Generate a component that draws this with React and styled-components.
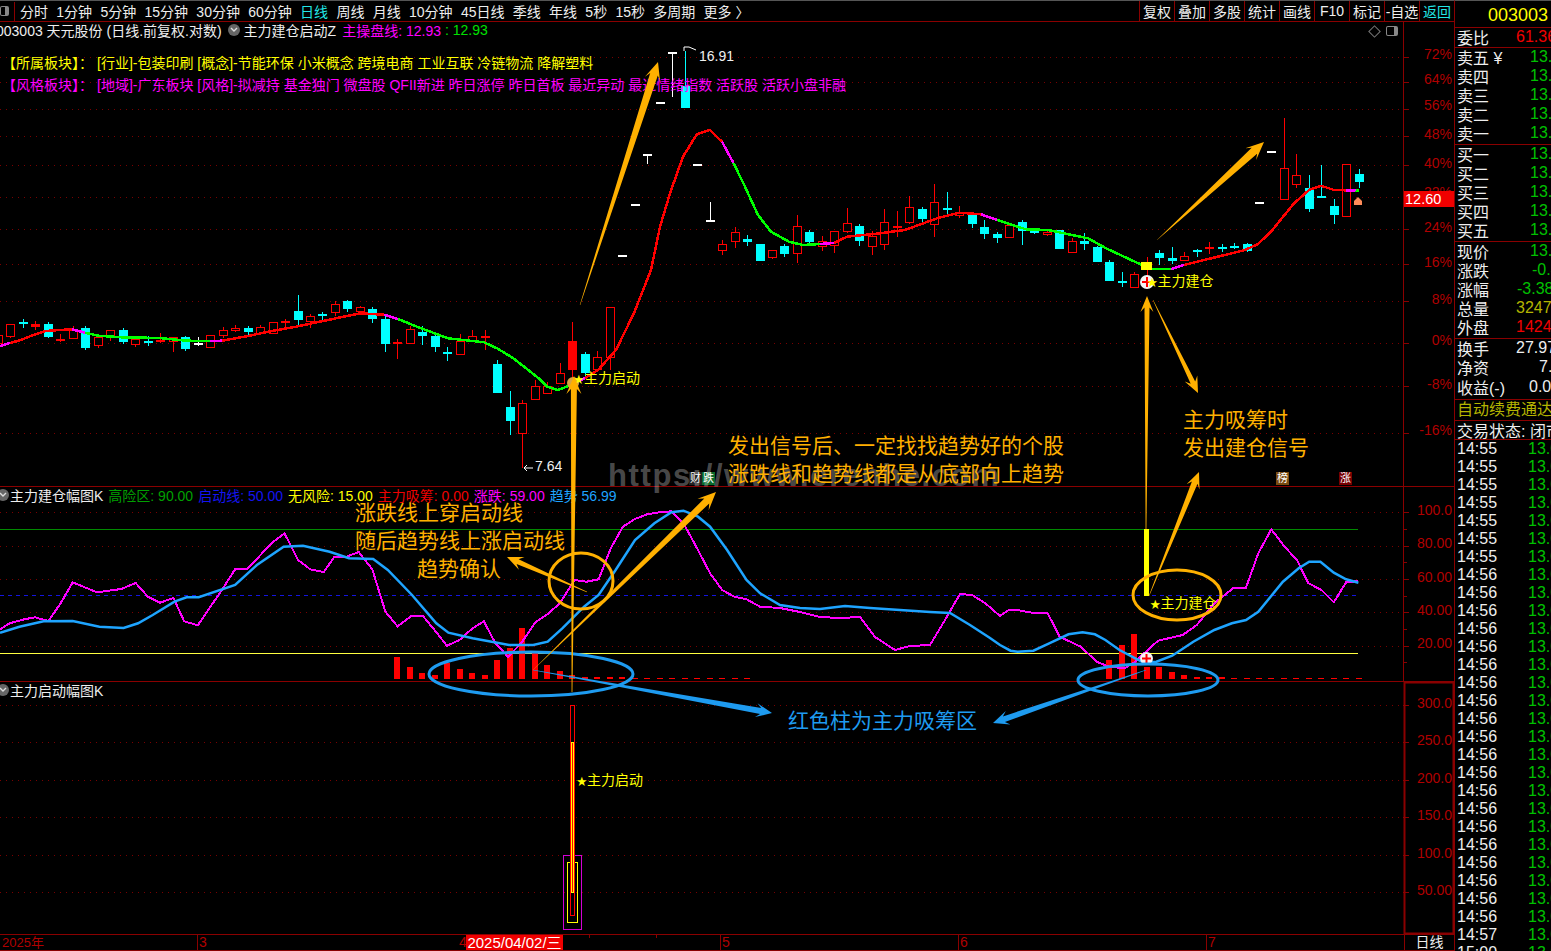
import React from "react";
import styled, { createGlobalStyle } from "styled-components";

const FONT = `"Liberation Sans", "Noto Sans CJK SC", sans-serif`;
const ORANGE = "#ffb000";
const BLUE = "#1e9bf0";
const DARKRED = "#8a0000";
const AXIS = "#b00000";

const GlobalStyle = createGlobalStyle`
  html, body { margin: 0; padding: 0; background: #000; }
  body { font-family: ${FONT}; overflow: hidden; }
`;

const Page = styled.div`
  display: flex;
  width: 1551px;
  height: 951px;
  overflow: hidden;
  background: #000;
  color: #eee;
`;

const Main = styled.div`
  display: flex;
  flex-direction: column;
  width: 1454px;
  flex: none;
`;

/* ---------- toolbar ---------- */
const Toolbar = styled.div`
  display: flex;
  align-items: center;
  justify-content: space-between;
  height: 22px;
  flex: none;
  box-sizing: border-box;
  border-top: 1px solid #555;
  border-bottom: 1px solid ${DARKRED};
  font-size: 14px;
`;

const Periods = styled.div`
  display: flex;
  align-items: center;
  gap: 8.3px;
`;

const ToggleBox = styled.div`
  width: 14px;
  height: 19px;
  margin-right: -3.3px;
  border-right: 1px solid ${DARKRED};
  display: flex;
  align-items: center;
`;

const PanelGlyph = styled.span`
  display: block;
  box-sizing: border-box;
  width: ${(p) => p.$w}px;
  height: 10px;
  border: 1px solid #888;
  border-radius: 2px;
  border-right: 4px solid #888;
`;

const Period = styled.span`
  color: ${(p) => (p.$active ? "#22e6e6" : "#eee")};
  white-space: nowrap;
`;

const Tools = styled.div`
  display: flex;
  height: 20px;
`;

const Tool = styled.span`
  display: flex;
  align-items: center;
  justify-content: center;
  width: 35px;
  box-sizing: border-box;
  border-left: 1px solid ${DARKRED};
  color: ${(p) => (p.$link ? "#22e6e6" : "#eee")};
  white-space: nowrap;
`;

/* ---------- chart panes ---------- */
const Charts = styled.div`
  position: relative;
  flex: 1;
  display: flex;
  flex-direction: column;
  overflow: hidden;
`;

const Pane = styled.div`
  position: relative;
  height: ${(p) => p.$h}px;
  flex: none;
  box-sizing: border-box;
  border-bottom: ${(p) => (p.$open ? "none" : `1px solid ${DARKRED}`)};
`;

const PlotSvg = styled.svg`
  display: block;
`;

const AxisText = styled.text`
  font: 14px ${FONT};
  fill: ${AXIS};
  text-anchor: end;
`;

const Marker = styled.text`
  font: 14px ${FONT};
  fill: #ffff00;
`;

const StarGlyph = styled.tspan`
  font-size: 10.5px;
`;

const PriceNote = styled.text`
  font: 14px ${FONT};
  fill: #f0f0f0;
`;

const Legend = styled.div`
  position: absolute;
  left: 0;
  top: 0;
  display: flex;
  flex-direction: column;
  white-space: nowrap;
  font-size: 14px;
`;

const LegendRow = styled.div`
  display: flex;
  align-items: center;
  box-sizing: border-box;
  height: ${(p) => p.$h || 18}px;
  gap: ${(p) => p.$gap || 0}px;
  margin-top: ${(p) => p.$mt || 0}px;
  padding: 0 0 2px ${(p) => p.$pl || 0}px;
  color: ${(p) => p.$c || "#eee"};
`;

const Tone = styled.span`
  display: inline-flex;
  align-items: center;
  color: ${(p) => p.$c};
  margin-left: ${(p) => p.$ml || 0}px;
  white-space: pre;
`;

const DiskShape = styled.span`
  display: inline-flex;
  align-items: center;
  justify-content: center;
  width: 12px;
  height: 12px;
  margin: 0 ${(p) => p.$mr}px 0 ${(p) => p.$ml}px;
  border-radius: 50%;
  background: #666;
  flex: none;
`;

const Disk = ({ ml, mr }) => (
  <DiskShape $ml={ml} $mr={mr}>
    <svg width="8" height="6" viewBox="0 0 8 6">
      <polyline points="1,1 4,4 7,1" fill="none" stroke="#ddd" strokeWidth="1.4" />
    </svg>
  </DiskShape>
);

const TagRow = styled.div`
  position: absolute;
  top: 450px;
  left: 0;
  width: 0;
  height: 14px;
`;

const Badge = styled.span`
  position: absolute;
  left: ${(p) => p.$x}px;
  width: ${(p) => p.$w || 13}px;
  height: 13px;
  line-height: 13px;
  text-align: center;
  font-size: 11px;
  color: #fff;
  background: ${(p) => p.$bg};
`;

const PriceTag = styled.div`
  position: absolute;
  left: 1404px;
  top: 169px;
  width: 50px;
  height: 16px;
  line-height: 16px;
  padding-left: 1px;
  box-sizing: border-box;
  background: #f00000;
  color: #fff;
  font-size: 14.5px;
`;

const Corner = styled.div`
  position: absolute;
  left: 1370px;
  top: 4px;
  display: flex;
  align-items: center;
  gap: 7px;
`;

const Diamond = styled.span`
  width: 7px;
  height: 7px;
  border: 1px solid #777;
  transform: rotate(45deg);
`;

/* ---------- annotation overlay ---------- */
const Overlay = styled.svg`
  position: absolute;
  left: 0;
  top: 0;
  pointer-events: none;
`;

const Note = styled.div`
  position: absolute;
  left: ${(p) => p.$x}px;
  top: ${(p) => p.$y}px;
  color: ${(p) => p.$c || ORANGE};
  font-size: 21px;
  line-height: 28px;
  white-space: nowrap;
`;

const Watermark = styled.div`
  position: absolute;
  left: 608px;
  top: 436px;
  color: rgba(255, 255, 255, 0.3);
  font-size: 31px;
  font-weight: 700;
  line-height: 36px;
  letter-spacing: 1.6px;
  white-space: nowrap;
`;

/* ---------- time axis ---------- */
const TimeAxis = styled.div`
  display: flex;
  height: 17px;
  flex: none;
  box-sizing: border-box;
  border-top: 1px solid ${DARKRED};
  border-bottom: 1px solid ${DARKRED};
  font-size: 14px;
  line-height: 15px;
  color: ${AXIS};
`;

const TimeCell = styled.div`
  width: ${(p) => p.$w}px;
  flex: none;
  box-sizing: border-box;
  padding-left: ${(p) => p.$pl ?? 1}px;
  border-left: ${(p) => (p.$line ? `1px solid ${DARKRED}` : "none")};
  overflow: hidden;
  white-space: nowrap;
`;

const YearCell = styled(TimeCell)`
  font-size: 13px;
  padding-left: 2px;
`;

const TickCell = styled.div`
  width: ${(p) => p.$w}px;
  flex: none;
  box-sizing: border-box;
  height: 3px;
  border-left: 1px solid ${DARKRED};
`;

const Cursor = styled.div`
  width: 97px;
  flex: none;
  background: #f00000;
  color: #fff;
  font-size: 15px;
  text-align: center;
  white-space: nowrap;
`;

const TimeMode = styled(TimeCell)`
  color: #eee;
  text-align: center;
`;

/* ---------- quote column ---------- */
const Quote = styled.div`
  width: 97px;
  flex: none;
  display: flex;
  flex-direction: column;
  box-sizing: border-box;
  border-left: 1px solid ${DARKRED};
  border-top: 1px solid #555;
  overflow: hidden;
  font-size: 16px;
`;

const Code = styled.div`
  height: 27px;
  flex: none;
  box-sizing: border-box;
  padding: 4px 3px 0 0;
  border-bottom: 1px solid ${DARKRED};
  color: #ffff00;
  font-size: 18px;
  line-height: 20px;
  text-align: right;
`;

const Block = styled.div`
  flex: none;
  padding: 0 0 0 2px;
  box-sizing: border-box;
  height: ${(p) => p.$h}px;
  border-bottom: 1px solid ${DARKRED};
  overflow: hidden;
`;

const Row = styled.div`
  display: flex;
  align-items: center;
  box-sizing: border-box;
  height: ${(p) => p.$h || 19.2}px;
  padding-bottom: 2px;
  white-space: nowrap;
  position: relative;
`;

const RowLabel = styled.span`
  color: #eee;
  flex: none;
`;

const RowValue = styled.span`
  position: absolute;
  left: ${(p) => p.$x}px;
  color: ${(p) => p.$c || "#00c000"};
`;

const AdText = styled.div`
  color: #b4b400;
  line-height: 19px;
  white-space: nowrap;
`;

const Ticks = styled.div`
  flex: 1;
  padding: 1px 0 0 2px;
  overflow: hidden;
`;

/* ---------- data (traced from the daily chart, page coordinates) ---------- */
const candleX = (i) => Math.round(10.3 + 12.487 * i);

// kind: h hollow red, r solid red, c cyan, w white -> high, top, bottom, low
const CANDLES = [
  ["h", 335, 335, 343, 345], ["h", 324, 324, 336, 338], ["c", 319, 322, 323, 328], ["r", 321, 324, 327, 330],
  ["c", 322, 324, 337, 338], ["r", 334, 339, 341, 342], ["h", 326, 329, 338, 338], ["c", 326, 328, 348, 350],
  ["h", 337, 337, 345, 348], ["h", 330, 330, 337, 341], ["c", 328, 330, 342, 344], ["h", 336, 339, 344, 347],
  ["c", 336, 341, 342, 346], ["r", 333, 340, 341, 343], ["h", 337, 337, 341, 352], ["c", 336, 337, 349, 351],
  ["w", 337, 343, 344, 346], ["h", 335, 335, 347, 347], ["h", 327, 330, 335, 338], ["h", 325, 328, 330, 332],
  ["c", 326, 328, 332, 335], ["h", 325, 327, 333, 335], ["h", 322, 322, 333, 333], ["r", 319, 321, 323, 330],
  ["c", 295, 311, 320, 325], ["h", 314, 316, 321, 328], ["c", 312, 314, 315, 320], ["h", 301, 304, 312, 316],
  ["c", 300, 301, 309, 312], ["h", 306, 307, 311, 315], ["c", 307, 309, 319, 323], ["c", 315, 319, 344, 352],
  ["r", 339, 342, 344, 359], ["h", 326, 329, 343, 344], ["c", 326, 332, 336, 345], ["c", 333, 336, 347, 352],
  ["c", 347, 352, 353, 361], ["h", 334, 341, 354, 354], ["h", 330, 336, 341, 341], ["r", 330, 336, 338, 350],
  ["c", 360, 364, 393, 393], ["c", 391, 407, 421, 435], ["h", 400, 403, 433, 468], ["h", 380, 386, 399, 399],
  ["h", 382, 386, 393, 393], ["h", 363, 373, 383, 383], ["r", 322, 341, 370, 380], ["c", 352, 354, 373, 376],
  ["h", 351, 357, 369, 369], ["h", 307, 307, 357, 370], ["w", 255, 255, 256, 256], ["w", 204, 204, 205, 205],
  ["w", 154, 154, 155, 164], ["w", 102, 102, 103, 103], ["w", 52, 52, 53, 97], ["c", 51, 86, 108, 108],
  ["w", 164, 164, 165, 165], ["w", 202, 220, 221, 221], ["h", 240, 244, 250, 255], ["h", 227, 232, 241, 248],
  ["c", 235, 239, 242, 246], ["c", 244, 244, 261, 261], ["h", 250, 250, 257, 259], ["c", 244, 246, 254, 257],
  ["h", 215, 226, 253, 263], ["c", 230, 232, 242, 244], ["h", 236, 241, 246, 251], ["h", 231, 231, 245, 253],
  ["h", 208, 223, 231, 233], ["c", 224, 226, 241, 246], ["h", 231, 236, 246, 255], ["h", 209, 222, 244, 250],
  ["r", 211, 226, 228, 237], ["h", 196, 207, 222, 224], ["c", 207, 209, 219, 222], ["h", 184, 202, 224, 237],
  ["c", 192, 208, 209, 214], ["h", 206, 213, 215, 218], ["c", 212, 214, 224, 228], ["c", 220, 227, 234, 239],
  ["c", 232, 234, 238, 243], ["h", 223, 225, 237, 237], ["c", 220, 222, 231, 245], ["c", 228, 231, 232, 234],
  ["h", 230, 232, 234, 236], ["c", 230, 230, 249, 249], ["h", 238, 241, 252, 252], ["c", 233, 241, 244, 250],
  ["c", 246, 247, 262, 262], ["c", 260, 262, 281, 281], ["c", 272, 281, 282, 287], ["h", 272, 274, 287, 287],
  ["r", 257, 263, 265, 288], ["c", 250, 253, 258, 265], ["c", 247, 258, 261, 264], ["h", 252, 256, 260, 260],
  ["c", 249, 250, 251, 257], ["r", 242, 247, 249, 254], ["c", 244, 247, 248, 252], ["c", 243, 246, 247, 249],
  ["c", 243, 244, 251, 252], ["w", 202, 202, 203, 203], ["w", 151, 151, 152, 152], ["h", 118, 168, 199, 199],
  ["h", 154, 175, 184, 188], ["c", 175, 188, 209, 212], ["c", 165, 196, 197, 198], ["c", 199, 206, 215, 224],
  ["h", 164, 164, 216, 216], ["c", 169, 174, 182, 188],
];

const MAGENTA = "#ff00ff";
const GREEN = "#00ff00";
const RED = "#ff0000";

const TREND = [
  [MAGENTA, [[0, 346], [10, 343]]],
  [RED, [[10, 343], [21, 340], [34, 334.7], [46, 331], [60, 330], [72, 329.3]]],
  [MAGENTA, [[72, 329.3], [85, 332.7]]],
  [GREEN, [[85, 332.7], [98, 335.7], [122, 337.3], [160, 338], [186, 340.7], [210, 341]]],
  [MAGENTA, [[210, 341], [222, 340.7]]],
  [RED, [[222, 340.7], [248, 336], [272, 331], [296, 326.7], [334, 318.7], [360, 313.3], [384, 314.7]]],
  [MAGENTA, [[384, 314.7], [398, 319]]],
  [GREEN, [[398, 319], [417, 326.7], [448, 338.3], [484, 342.3], [497, 348.3], [513, 358], [540, 379.3], [547, 386.7], [558, 390], [571, 385]]],
  [MAGENTA, [[571, 385], [585, 378]]],
  [RED, [[585, 378], [598, 370], [616, 350], [634, 313], [651, 270], [660, 226.7], [670, 193.3], [683, 156.7], [697, 134], [710, 130], [722, 141.7]]],
  [MAGENTA, [[722, 141.7], [733.5, 163]]],
  [GREEN, [[733.5, 163], [745, 186.7], [758, 215], [771, 231.7], [789, 241.7], [803, 245], [820, 244]]],
  [MAGENTA, [[820, 244], [834, 243]]],
  [RED, [[834, 243], [847, 236.7], [874, 234], [905, 230], [937, 218.3], [959, 212.7], [981, 214.3]]],
  [MAGENTA, [[981, 214.3], [997, 220]]],
  [GREEN, [[997, 220], [1026, 229.3], [1048, 230], [1088, 238.3], [1106, 248.3], [1142, 265], [1151, 269], [1171, 269]]],
  [MAGENTA, [[1171, 269], [1184, 265]]],
  [RED, [[1184, 265], [1245, 250], [1258, 244], [1271, 231.7], [1294, 203.3], [1309, 190], [1321, 185.7], [1334, 190], [1346, 190.3]]],
  [MAGENTA, [[1346, 190.3], [1355, 190.5]]],
  [GREEN, [[1355, 190.5], [1359, 190.5]]],
];

const PRICE_GRID = [
  [57, 54, "72%"], [82, 79, "64%"], [109, 105, "56%"], [136, 134, "48%"], [165, 163, "40%"], [197, 192, "32%"],
  [229, 227, "24%"], [264, 262, "16%"], [301, 299, "8%"], [343, 340, "0%"], [386, 384, "-8%"], [433, 430, "-16%"],
];
const OSC_GRID = [[512, 510, "100.0"], [546, 543, "80.00"], [579, 577, "60.00"], [612, 610, "40.00"], [646, 643, "20.00"]];
const START_GRID = [[705, 703, "300.0"], [742, 740, "250.0"], [780, 778, "200.0"], [817, 815, "150.0"], [855, 853, "100.0"], [892, 890, "50.00"]];

const left = ([x, y]) => [x / 2.063, 480 + y / 3];
const right = ([x, y]) => [1000 + x / 2.846, 480 + y / 3];

const SWING = [
  ...[[0, 448], [20, 430], [50, 418], [72, 412], [100, 423], [125, 370], [150, 307], [200, 337], [250, 327], [280, 309], [305, 350], [330, 368], [358, 354], [380, 424], [408, 436], [460, 325], [485, 268], [510, 268], [560, 190], [587, 160], [615, 240], [640, 268], [668, 276], [690, 230], [715, 230], [740, 216], [768, 268], [795, 395], [820, 439], [848, 409], [873, 409], [898, 453], [922, 497], [948, 480], [975, 445], [998, 424], [1022, 490], [1048, 530], [1075, 490], [1105, 426], [1130, 402], [1155, 370], [1185, 300], [1210, 305], [1235, 298], [1260, 205], [1285, 140], [1310, 117], [1335, 103], [1360, 97], [1385, 94], [1410, 130], [1440, 210], [1465, 280], [1490, 330], [1515, 350], [1540, 358], [1568, 380]].map(left),
  [780, 608], [800, 612], [820, 617], [840, 618], [860, 617], [875, 637], [895, 650], [910, 646], [930, 645], [945, 620], [960, 594], [972, 595], [985, 603],
  ...[[0, 408], [25, 390], [50, 390], [90, 398], [135, 398], [170, 470], [230, 500], [275, 545], [310, 560], [355, 565], [385, 545], [410, 520], [450, 482], [520, 465], [560, 435], [610, 370], [665, 323], [700, 323], [735, 220], [772, 148], [810, 200], [845, 240], [878, 310], [915, 330], [950, 367], [985, 307], [1020, 303]].map(right),
];

const DRIFT = [
  ...[[0, 458], [40, 440], [90, 424], [150, 423], [205, 440], [255, 444], [285, 430], [315, 405], [360, 365], [385, 352], [410, 352], [485, 315], [530, 255], [585, 200], [625, 197], [680, 215], [720, 235], [770, 237], [800, 270], [850, 345], [900, 430], [925, 458], [975, 475], [1020, 487], [1050, 495], [1100, 495], [1130, 485], [1160, 445], [1205, 380], [1235, 345], [1270, 270], [1310, 180], [1350, 130], [1385, 97], [1410, 92], [1440, 110], [1465, 140], [1500, 210], [1540, 300], [1568, 340]].map(left),
  [780, 605], [800, 608], [820, 609], [845, 606], [870, 608], [900, 610], [930, 612], [950, 613], [970, 625], [990, 638],
  ...[[0, 495], [30, 512], [50, 515], [95, 512], [140, 490], [195, 463], [235, 457], [270, 463], [300, 480], [340, 510], [385, 535], [410, 548], [445, 545], [490, 527], [550, 485], [610, 450], [660, 430], [700, 420], [735, 395], [770, 350], [805, 305], [850, 265], [880, 245], [912, 245], [950, 278], [985, 298], [1020, 308]].map(right),
];

// accumulation bars: candle index -> top of bar
const BARS = [
  [31, 657], [32, 667], [33, 673], [34, 675], [35, 663], [36, 669], [37, 673], [38, 675], [39, 660], [40, 648],
  [41, 628], [42, 653], [43, 665], [44, 671], [45, 675], [46, 676.5], [47, 677], [48, 677], [49, 677],
  [50, 677.5], [51, 677.5], [52, 677.5], [53, 677.5], [54, 677.5], [55, 677.5], [56, 677.5], [57, 677.5], [58, 677.5], [59, 677.5],
  [88, 660], [89, 645], [90, 634], [91, 667], [92, 667], [93, 672], [94, 675], [95, 676.5], [96, 677], [97, 677],
  [98, 677.5], [99, 677.5], [100, 677.5], [101, 677.5], [102, 677.5], [103, 677.5], [104, 677.5], [105, 677.5], [106, 677.5], [107, 677.5], [108, 677.5],
];

const toPoints = (pts) => pts.map(([x, y]) => `${x.toFixed(1)},${y.toFixed(1)}`).join(" ");

// tapered arrow polygon, tail -> tip
const arrowPoints = (x1, y1, x2, y2, w0, w1, hl, hw) => {
  const len = Math.hypot(x2 - x1, y2 - y1);
  const ux = (x2 - x1) / len;
  const uy = (y2 - y1) / len;
  const nx = -uy;
  const ny = ux;
  const at = (back, side) => [x2 - ux * back + nx * side, y2 - uy * back + ny * side];
  return toPoints([
    [x1 + nx * w0 / 2, y1 + ny * w0 / 2],
    at(hl * 0.72, w1 / 2),
    at(hl, hw / 2),
    [x2, y2],
    at(hl, -hw / 2),
    at(hl * 0.72, -w1 / 2),
    [x1 - nx * w0 / 2, y1 - ny * w0 / 2],
  ]);
};

const ARROWS = [
  [ORANGE, 580, 305, 658, 62, 0.4, 8, 18, 16],
  [ORANGE, 572, 692, 574, 376, 0.8, 6, 18, 15],
  [ORANGE, 1146, 529, 1147, 296, 0.8, 5, 16, 13],
  [ORANGE, 1153, 300, 1198, 393, 0.4, 5, 16, 14],
  [ORANGE, 1149, 596, 1199, 472, 0.4, 6, 16, 14],
  [ORANGE, 1157, 240, 1264, 142, 0.4, 8, 18, 16],
  [ORANGE, 533, 670, 716, 492, 0.4, 7, 18, 16],
  [ORANGE, 587, 592, 507, 557, 0.4, 5, 16, 14],
  [BLUE, 533, 670, 772, 713, 0.6, 6, 16, 14],
  [BLUE, 1146, 670, 993, 723, 0.6, 6, 16, 14],
];

const ELLIPSES = [
  [ORANGE, 581, 581, 32, 28],
  [ORANGE, 1177, 595, 44, 25],
  [BLUE, 531, 674, 102, 22],
  [BLUE, 1148, 680, 70, 16],
];

const PERIODS = ["分时", "1分钟", "5分钟", "15分钟", "30分钟", "60分钟", "日线", "周线", "月线", "10分钟", "45日线", "季线", "年线", "5秒", "15秒", "多周期", "更多 〉"];
const TOOLS = ["复权", "叠加", "多股", "统计", "画线", "F10", "标记", "-自选"];

const STATS = [
  ["现价", "13.05", "#00c000", 73],
  ["涨跌", "-0.46", "#00c000", 75],
  ["涨幅", "-3.38%", "#00c000", 60],
  ["总量", "324761", "#b4b400", 59],
  ["外盘", "142456", "#f00000", 59],
];

const TICK_TIMES = [
  ...Array(7).fill("14:55"),
  ...Array(20).fill("14:56"),
  "14:57",
  "15:00",
];

/* ---------- drawing parts ---------- */
const GridLines = ({ rows, tickEvery }) => (
  <>
    {rows.map(([y]) => (
      <line key={y} x1="0" x2="1403" y1={y + 0.5} y2={y + 0.5} stroke="#7a0000" strokeDasharray="1 5" />
    ))}
    {rows.map(([y]) => (
      <line key={y} x1="1403" x2="1409" y1={y + 0.5} y2={y + 0.5} stroke={DARKRED} />
    ))}
    {tickEvery && tickEvery.map((y) => (
      <line key={y} x1="1403" x2="1407" y1={y + 0.5} y2={y + 0.5} stroke={DARKRED} />
    ))}
    {rows.map(([y, labelY, text]) => (
      <AxisText key={text} x="1452" y={labelY + 5}>{text}</AxisText>
    ))}
  </>
);

const Candle = ({ x, kind, high, top, bot, low }) => {
  const tone = kind === "c" ? "#00ffff" : kind === "w" ? "#fff" : RED;
  const flat = bot - top <= 2;
  return (
    <g shapeRendering="crispEdges">
      <rect x={x} y={high} width="1" height={low - high} fill={tone} />
      {kind === "h" ? (
        <rect x={x - 4 + 0.5} y={top + 0.5} width="8" height={bot - top} fill="#000" stroke={RED} />
      ) : (
        <rect x={x - 4} y={top} width="9" height={flat ? 2 : bot - top} fill={tone} />
      )}
    </g>
  );
};

const PlusBadge = ({ x, y, r }) => (
  <g>
    <circle cx={x} cy={y} r={r} fill="#f4f4f4" />
    <rect x={x - r + 2} y={y - 1} width={2 * r - 4} height="2" fill={RED} />
    <rect x={x - 1} y={y - r + 2} width="2" height={2 * r - 4} fill={RED} />
  </g>
);

const PriceChart = () => (
  <PlotSvg width="1454" height="464" viewBox="0 22 1454 464">
    <GridLines rows={PRICE_GRID} />
    <line x1="1403.5" x2="1403.5" y1="22" y2="486" stroke={DARKRED} />
    {CANDLES.map(([kind, high, top, bot, low], i) => (
      <Candle key={i} x={candleX(i - 1)} kind={kind} high={high} top={top} bot={bot} low={low} />
    ))}
    {TREND.map(([tone, pts], i) => (
      <polyline key={i} points={toPoints(pts)} fill="none" stroke={tone} strokeWidth="2.5" shapeRendering="crispEdges" />
    ))}

    <polyline points="684,51 684,47 689,47 696,50" fill="none" stroke="#fff" />
    <PriceNote x="699" y="61">16.91</PriceNote>
    <polyline points="533,468 524,468 527,465 524,468 527,471" fill="none" stroke="#fff" />
    <PriceNote x="535" y="471">7.64</PriceNote>

    <circle cx="573" cy="383" r="6" fill="#d9a441" />
    <Marker x="573.5" y="383"><StarGlyph>★</StarGlyph>主力启动</Marker>

    <rect x="1141" y="262" width="11" height="8" fill="#ffff00" />
    <PlusBadge x={1147} y={282} r={7} />
    <Marker x="1147" y="286"><StarGlyph>★</StarGlyph>主力建仓</Marker>
    <polygon points="1354,205 1354,201 1358,197 1362,201 1362,205" fill="#ff8c5a" />
    <rect x="1346" y="189" width="10" height="2" fill={MAGENTA} />
  </PlotSvg>
);

const OscChart = () => (
  <PlotSvg width="1454" height="194" viewBox="0 487 1454 194">
    <GridLines rows={OSC_GRID} tickEvery={[529, 562, 596, 629, 662]} />
    <line x1="1403.5" x2="1403.5" y1="487" y2="681" stroke={DARKRED} />
    <line x1="0" x2="1358" y1="529.5" y2="529.5" stroke="#008a00" />
    <line x1="0" x2="1358" y1="595.5" y2="595.5" stroke="#1414e0" strokeDasharray="4 4" />
    <line x1="0" x2="1358" y1="653.5" y2="653.5" stroke="#ffff40" />
    {BARS.map(([i, top]) => (
      <rect key={i} x={candleX(i) - 3} y={top} width="6" height={679 - top} fill={RED} shapeRendering="crispEdges" />
    ))}
    <polyline points={toPoints(SWING)} fill="none" stroke={MAGENTA} strokeWidth="2" shapeRendering="crispEdges" />
    <polyline points={toPoints(DRIFT)} fill="none" stroke="#1ea4ff" strokeWidth="2.5" />
    <rect x="1144" y="529" width="5" height="67" fill="#ffff00" />
    <PlusBadge x={1146.5} y={658.5} r={6.5} />
    <Marker x="1150" y="608"><StarGlyph>★</StarGlyph>主力建仓</Marker>
  </PlotSvg>
);

const StartChart = () => (
  <PlotSvg width="1454" height="252" viewBox="0 682 1454 252">
    <GridLines rows={START_GRID} />
    <rect x="1404.5" y="682.5" width="49" height="251" fill="none" stroke={DARKRED} strokeWidth="2" />
    <g fill="none" shapeRendering="crispEdges">
      <rect x="563.5" y="855.5" width="18" height="74" stroke="#d400d4" />
      <rect x="567.5" y="862.5" width="10" height="60" stroke="#ffff00" />
      <rect x="570.5" y="705.5" width="4" height="210" stroke={RED} />
      <rect x="571.5" y="742.5" width="2" height="150" stroke="#ffff00" fill={RED} />
    </g>
    <Marker x="576.5" y="785"><StarGlyph>★</StarGlyph>主力启动</Marker>
  </PlotSvg>
);

export default function App() {
  return (
    <Page>
      <GlobalStyle />
      <Main>
        <Toolbar>
          <Periods>
            <ToggleBox>
              <PanelGlyph $w={9} />
            </ToggleBox>
            {PERIODS.map((p) => (
              <Period key={p} $active={p === "日线"}>{p}</Period>
            ))}
          </Periods>
          <Tools>
            {TOOLS.map((t) => (
              <Tool key={t}>{t}</Tool>
            ))}
            <Tool $link>返回</Tool>
          </Tools>
        </Toolbar>

        <Charts>
          <Pane $h={465}>
            <PriceChart />
            <Legend>
              <LegendRow $h={18}>
                <Tone $c="#eee" $ml={-4}>003003 天元股份 (日线.前复权.对数)</Tone>
                <Disk ml={6} mr={4} />
                <Tone $c="#eee">主力建仓启动Z</Tone>
                <Tone $c={MAGENTA} $ml={6}>主操盘线: 12.93</Tone>
                <Tone $c="#00e000">{" : 12.93"}</Tone>
              </LegendRow>
              <LegendRow $h={22} $mt={12} $c="#ffff00" $gap={4} $pl={2}>
                <span>【所属板块】：</span>
                <span>[行业]-包装印刷 [概念]-节能环保 小米概念 跨境电商 工业互联 冷链物流 降解塑料</span>
              </LegendRow>
              <LegendRow $h={22} $c={MAGENTA} $gap={4} $pl={2}>
                <span>【风格板块】：</span>
                <span>[地域]-广东板块 [风格]-拟减持 基金独门 微盘股 QFII新进 昨日涨停 昨日首板 最近异动 最近情绪指数 活跃股 活跃小盘非融</span>
              </LegendRow>
            </Legend>
            <Corner>
              <Diamond />
              <PanelGlyph $w={12} />
            </Corner>
            <PriceTag>12.60</PriceTag>
            <TagRow>
              <Badge $x={689} $bg="#222">财</Badge>
              <Badge $x={702} $bg="#0a6a2a">跌</Badge>
              <Badge $x={1276} $bg="#7a4a10">榜</Badge>
              <Badge $x={1339} $bg="#700">涨</Badge>
            </TagRow>
          </Pane>

          <Pane $h={195}>
            <OscChart />
            <Legend>
              <LegendRow $h={17} $gap={5}>
                <Tone $c="#eee"><Disk ml={-3} mr={1} />主力建仓幅图K</Tone>
                <Tone $c="#00a000">高险区: 90.00</Tone>
                <Tone $c="#1414f0">启动线: 50.00</Tone>
                <Tone $c="#ffff00">无风险: 15.00</Tone>
                <Tone $c="#f00000">主力吸筹: 0.00</Tone>
                <Tone $c={MAGENTA}>涨跌: 59.00</Tone>
                <Tone $c="#1ea4ff">趋势 56.99</Tone>
              </LegendRow>
            </Legend>
          </Pane>

          <Pane $h={252} $open>
            <StartChart />
            <Legend>
              <LegendRow $h={17}>
                <Tone $c="#eee"><Disk ml={-3} mr={1} />主力启动幅图K</Tone>
              </LegendRow>
            </Legend>
          </Pane>

          <Watermark>https://www.erenhe.com</Watermark>
          <Overlay width="1454" height="912" viewBox="0 22 1454 912">
            {ELLIPSES.map(([tone, cx, cy, rx, ry]) => (
              <ellipse key={cx} cx={cx} cy={cy} rx={rx} ry={ry} fill="none" stroke={tone} strokeWidth="3" />
            ))}
            {ARROWS.map(([tone, ...a], i) => (
              <polygon key={i} points={arrowPoints(...a)} fill={tone} />
            ))}
          </Overlay>
          <Note $x={728} $y={410}>发出信号后、一定找找趋势好的个股<br />涨跌线和趋势线都是从底部向上趋势</Note>
          <Note $x={1183} $y={384}>主力吸筹时<br />发出建仓信号</Note>
          <Note $x={355} $y={477}>涨跌线上穿启动线<br />随后趋势线上涨启动线</Note>
          <Note $x={417} $y={533}>趋势确认</Note>
          <Note $x={788} $y={685} $c={BLUE}>红色柱为主力吸筹区</Note>
        </Charts>

        <TimeAxis>
          <YearCell $w={197}>2025年</YearCell>
          <TimeCell $w={262} $line>3</TimeCell>
          <TimeCell $w={7} $pl={0}>4</TimeCell>
          <Cursor>2025/04/02/三</Cursor>
          <TimeCell $w={26} $pl={0} />
          <TickCell $w={67} />
          <TickCell $w={64} />
          <TimeCell $w={238} $line>5</TimeCell>
          <TimeCell $w={248} $line>6</TimeCell>
          <TimeCell $w={198} $line>7</TimeCell>
          <TimeMode $w={50} $line $pl={0}>日线</TimeMode>
        </TimeAxis>
      </Main>

      <Quote>
        <Code>003003</Code>
        <Block $h={20}>
          <Row $h={19}>
            <RowLabel>委比</RowLabel>
            <RowValue $x={59} $c="#f00000">61.36%</RowValue>
          </Row>
        </Block>
        <Block $h={97}>
          {["卖五 ¥", "卖四", "卖三", "卖二", "卖一"].map((l) => (
            <Row key={l}>
              <RowLabel>{l}</RowLabel>
              <RowValue $x={73}>13.10</RowValue>
            </Row>
          ))}
        </Block>
        <Block $h={97}>
          {["买一", "买二", "买三", "买四", "买五"].map((l) => (
            <Row key={l}>
              <RowLabel>{l}</RowLabel>
              <RowValue $x={73}>13.05</RowValue>
            </Row>
          ))}
        </Block>
        <Block $h={97}>
          {STATS.map(([l, v, c, x]) => (
            <Row key={l}>
              <RowLabel>{l}</RowLabel>
              <RowValue $x={x} $c={c}>{v}</RowValue>
            </Row>
          ))}
        </Block>
        <Block $h={61}>
          <Row $h={19.5}><RowLabel>换手</RowLabel><RowValue $x={59} $c="#eee">27.97%</RowValue></Row>
          <Row $h={19.5}><RowLabel>净资</RowLabel><RowValue $x={82} $c="#eee">7.51</RowValue></Row>
          <Row $h={19.5}><RowLabel>收益(-)</RowLabel><RowValue $x={72} $c="#eee">0.05</RowValue></Row>
        </Block>
        <Block $h={21}>
          <AdText>自动续费通达信</AdText>
        </Block>
        <Block $h={19}>
          <Row $h={19}><RowLabel>交易状态: 闭市</RowLabel></Row>
        </Block>
        <Ticks>
          {TICK_TIMES.map((t, i) => (
            <Row key={i} $h={18}>
              <RowLabel>{t}</RowLabel>
              <RowValue $x={71}>13.05</RowValue>
            </Row>
          ))}
        </Ticks>
      </Quote>
    </Page>
  );
}
